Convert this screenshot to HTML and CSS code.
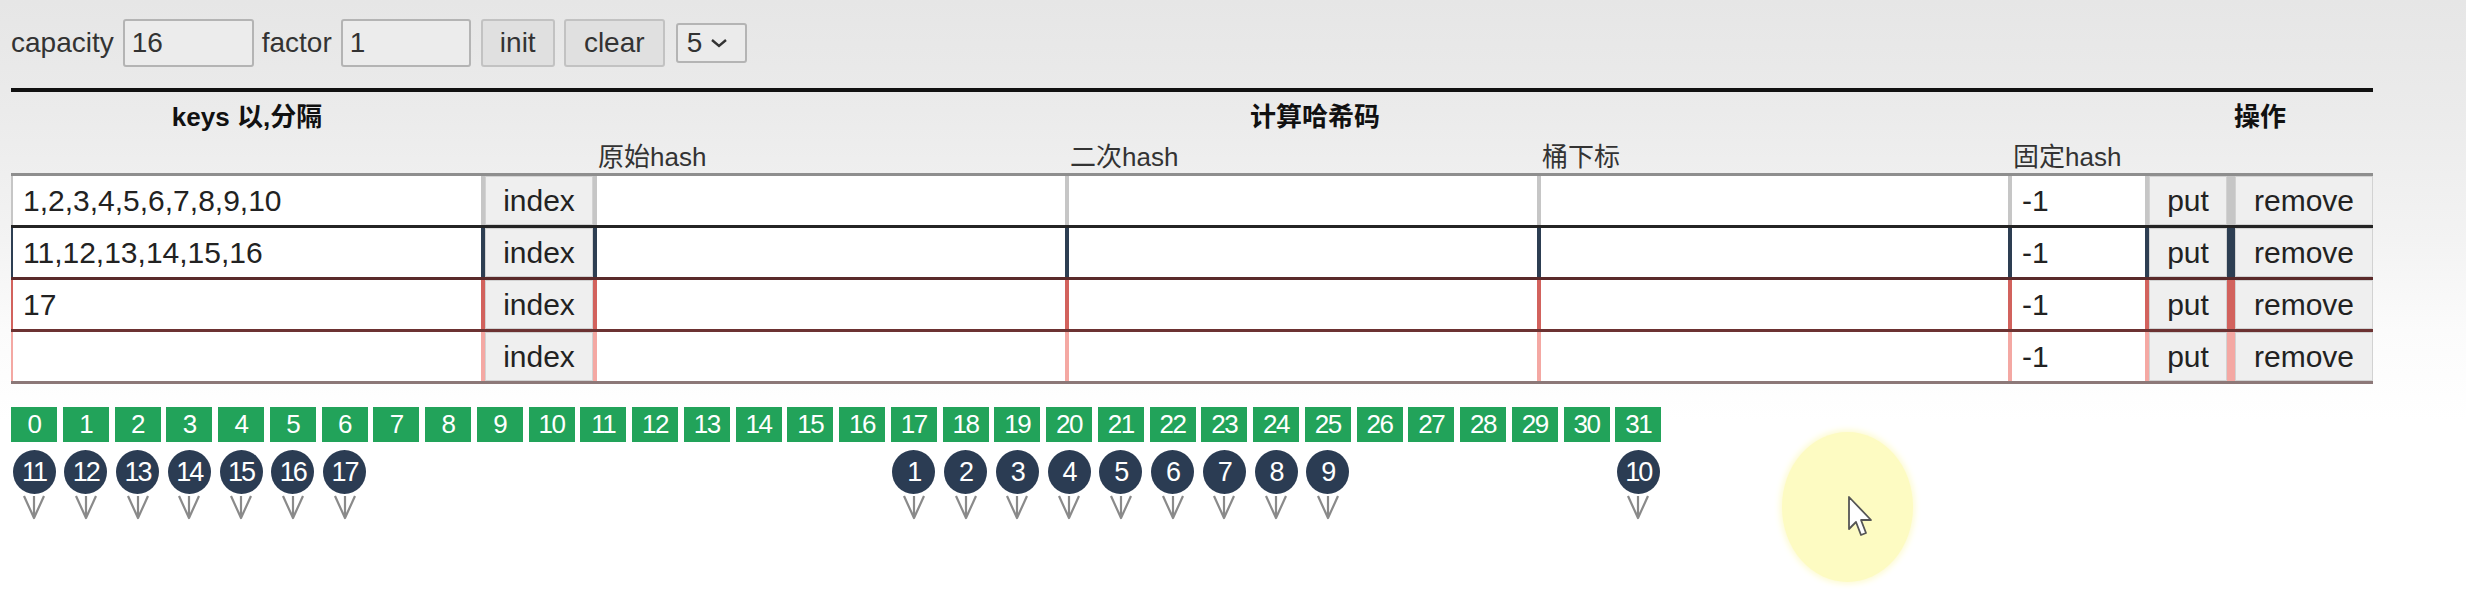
FILE: index.html
```html
<!DOCTYPE html>
<html lang="zh">
<head>
<meta charset="utf-8">
<title>hash</title>
<link rel="stylesheet" href="styles.css">
</head>
<body>
<div class="page">
  <div class="toolbar">
    <span class="lbl">capacity</span>
    <input class="tin" value="16">
    <span class="lbl">factor</span>
    <input class="tin tin2" value="1">
    <button class="tbtn b-init">init</button>
    <button class="tbtn b-clear">clear</button>
    <div class="sel"><span>5</span><svg width="20" height="14" viewBox="0 0 20 14"><path d="M3 4 L10 10 L17 4" fill="none" stroke="#333" stroke-width="2.4"/></svg></div>
  </div>
  <div class="rule"></div>
  <div class="thead1 grid">
    <div class="th c1">keys 以,分隔</div>
    <div class="th c2">计算哈希码</div>
    <div class="th c3">操作</div>
  </div>
  <div class="thead2 grid">
    <div></div><div></div>
    <div class="sub">原始hash</div>
    <div class="sub">二次hash</div>
    <div class="sub">桶下标</div>
    <div class="sub">固定hash</div>
    <div></div><div></div>
  </div>
  <div class="row grid r1">
    <div class="cell"><div class="in">1,2,3,4,5,6,7,8,9,10</div></div>
    <div class="cell"><div class="bt">index</div></div>
    <div class="cell"><div class="in"></div></div>
    <div class="cell"><div class="in"></div></div>
    <div class="cell"><div class="in"></div></div>
    <div class="cell"><div class="in">-1</div></div>
    <div class="cell cput"><div class="bt">put</div></div>
    <div class="cell crem"><div class="bt">remove</div></div>
  </div>
  <div class="row grid r2">
    <div class="cell"><div class="in">11,12,13,14,15,16</div></div>
    <div class="cell"><div class="bt">index</div></div>
    <div class="cell"><div class="in"></div></div>
    <div class="cell"><div class="in"></div></div>
    <div class="cell"><div class="in"></div></div>
    <div class="cell"><div class="in">-1</div></div>
    <div class="cell cput"><div class="bt">put</div></div>
    <div class="cell crem"><div class="bt">remove</div></div>
  </div>
  <div class="row grid r3">
    <div class="cell"><div class="in">17</div></div>
    <div class="cell"><div class="bt">index</div></div>
    <div class="cell"><div class="in"></div></div>
    <div class="cell"><div class="in"></div></div>
    <div class="cell"><div class="in"></div></div>
    <div class="cell"><div class="in">-1</div></div>
    <div class="cell cput"><div class="bt">put</div></div>
    <div class="cell crem"><div class="bt">remove</div></div>
  </div>
  <div class="row grid r4">
    <div class="cell"><div class="in"></div></div>
    <div class="cell"><div class="bt">index</div></div>
    <div class="cell"><div class="in"></div></div>
    <div class="cell"><div class="in"></div></div>
    <div class="cell"><div class="in"></div></div>
    <div class="cell"><div class="in">-1</div></div>
    <div class="cell cput"><div class="bt">put</div></div>
    <div class="cell crem"><div class="bt">remove</div></div>
  </div>
  <div class="tend"></div>

  <div class="buckets">
    <div class="bk">0</div><div class="bk">1</div><div class="bk">2</div><div class="bk">3</div>
    <div class="bk">4</div><div class="bk">5</div><div class="bk">6</div><div class="bk">7</div>
    <div class="bk">8</div><div class="bk">9</div><div class="bk">10</div><div class="bk">11</div>
    <div class="bk">12</div><div class="bk">13</div><div class="bk">14</div><div class="bk">15</div>
    <div class="bk">16</div><div class="bk">17</div><div class="bk">18</div><div class="bk">19</div>
    <div class="bk">20</div><div class="bk">21</div><div class="bk">22</div><div class="bk">23</div>
    <div class="bk">24</div><div class="bk">25</div><div class="bk">26</div><div class="bk">27</div>
    <div class="bk">28</div><div class="bk">29</div><div class="bk">30</div><div class="bk">31</div>
  </div>

  <div class="pins" id="pins"></div>
</div>

<div class="glow"></div>
<svg class="cursor" width="28" height="44" viewBox="0 0 28 44"><path d="M2 2 L2 34 L9 27 L14 40 L19 38 L14 25 L24 25 Z" fill="#fff" stroke="#555" stroke-width="1.8" stroke-linejoin="round"/></svg>
<script src="app.js"></script>
</body>
</html>
```

FILE: app.js
```js
(function () {
  var map = {0: 11, 1: 12, 2: 13, 3: 14, 4: 15, 5: 16, 6: 17,
             17: 1, 18: 2, 19: 3, 20: 4, 21: 5, 22: 6, 23: 7, 24: 8, 25: 9, 31: 10};
  var pins = document.getElementById('pins');
  for (var i = 0; i < 32; i++) {
    var slot = document.createElement('div');
    slot.className = 'slot';
    if (map[i] !== undefined) {
      slot.innerHTML = '<div class="ball">' + map[i] + '</div>' +
        '<svg class="arr" width="24" height="26" viewBox="0 0 24 26">' +
        '<path d="M2 2 L12 24 L22 2 M12 2 L12 24" fill="none" stroke="#8a8a8a" stroke-width="2.2" stroke-linejoin="round"/></svg>';
    }
    pins.appendChild(slot);
  }
})();
```

FILE: styles.css
```css
html, body {
  margin: 0;
  padding: 0;
}
body {
  width: 2466px;
  height: 592px;
  overflow: hidden;
  position: relative;
  font-family: "Liberation Sans", "Noto Sans CJK SC", sans-serif;
  color: #2e2e2e;
  background: linear-gradient(to bottom, #e6e6e6 0px, #ebebeb 110px, #f3f3f3 240px, #fbfbfb 330px, #ffffff 420px);
}
.page {
  padding: 19px 0 0 11px;
  width: 2362px;
}
.toolbar {
  display: flex;
  align-items: center;
  height: 48px;
  font-size: 28px;
}
.lbl {
  color: #333;
  margin-right: 9px;
}
.tin {
  box-sizing: border-box;
  width: 131px;
  height: 48px;
  border: 2px solid #b4b4b4;
  border-radius: 3px;
  background: #ececec;
  font: 28px "Liberation Sans", sans-serif;
  color: #333;
  padding: 0 0 0 7px;
  margin-right: 8px;
}
.tin2 {
  width: 130px;
  margin-right: 10px;
}
.tbtn {
  box-sizing: border-box;
  height: 48px;
  border: 2px solid #c2c2c2;
  border-radius: 3px;
  background: #e0e0e0;
  font: 28px "Liberation Sans", sans-serif;
  color: #333;
  padding: 0;
  margin-right: 9px;
}
.b-init { width: 74px; }
.b-clear { width: 101px; margin-right: 11px; }
.sel {
  box-sizing: border-box;
  width: 71px;
  height: 40px;
  border: 2px solid #b4b4b4;
  border-radius: 3px;
  background: #ebebeb;
  display: flex;
  align-items: center;
  padding-left: 9px;
  gap: 7px;
  font-size: 28px;
  color: #333;
}
.rule {
  margin-top: 21px;
  height: 4px;
  background: #111;
}
.grid {
  display: grid;
  grid-template-columns: 472px 112px 472px 472px 471px 137px 84px 142px;
}
.thead1 {
  height: 44px;
  align-items: center;
  font-size: 26px;
  font-weight: bold;
  color: #111;
}
.th { text-align: center; }
.c1 { grid-column: 1 / 2; }
.c2 { grid-column: 2 / 7; }
.c3 { grid-column: 7 / 9; }
.thead2 {
  height: 37px;
  align-items: center;
  font-size: 26px;
  color: #333;
}
.sub { padding-left: 3px; }
.row {
  height: 52px;
  box-sizing: border-box;
  border-top: 3px solid var(--h);
}
.r1 { --h: #8e8e8e; --v: #c6c6c6; }
.r2 { --h: #242424; --v: #2d3e52; }
.r3 { --h: #5a2a2a; --v: #d2625d; }
.r4 { --h: #6c3232; --v: #f4a8a3; }
.tend {
  height: 3px;
  background: #8c7878;
}
.cell {
  box-sizing: border-box;
  border-left: 2px solid var(--v);
  border-right: 2px solid var(--v);
  display: flex;
}
.cput { border-right-width: 4px; }
.crem { border-left-width: 4px; border-right-width: 0; }
.in {
  flex: 1;
  background: #fff;
  font-size: 30px;
  color: #222;
  display: flex;
  align-items: center;
  padding-left: 10px;
  white-space: nowrap;
  overflow: hidden;
}
.bt {
  flex: 1;
  background: #efefef;
  border: 1px solid #d2d2d2;
  font-size: 30px;
  color: #222;
  display: flex;
  align-items: center;
  justify-content: center;
}
.buckets {
  margin-top: 23px;
  display: flex;
  gap: 5.75px;
}
.bk {
  width: 46px;
  height: 35px;
  background: #22a35a;
  color: #fff;
  font-size: 26px;
  display: flex;
  align-items: center;
  justify-content: center;
  letter-spacing: -1.5px;
}
.pins {
  margin-top: 8px;
  display: flex;
  gap: 5.75px;
}
.slot {
  width: 46px;
  display: flex;
  flex-direction: column;
  align-items: center;
}
.ball {
  width: 43px;
  height: 44px;
  border-radius: 50%;
  background: #2b3c53;
  color: #fff;
  font-size: 27px;
  letter-spacing: -2px;
  display: flex;
  align-items: center;
  justify-content: center;
}
.arr {
  display: block;
  margin-top: 0;
}
.glow {
  position: absolute;
  left: 1782px;
  top: 432px;
  width: 131px;
  height: 150px;
  border-radius: 50%;
  background: #fdfbc2;
  box-shadow: 0 0 6px 2px #fdfbd0;
}
.cursor {
  position: absolute;
  left: 1847px;
  top: 495px;
}
```
